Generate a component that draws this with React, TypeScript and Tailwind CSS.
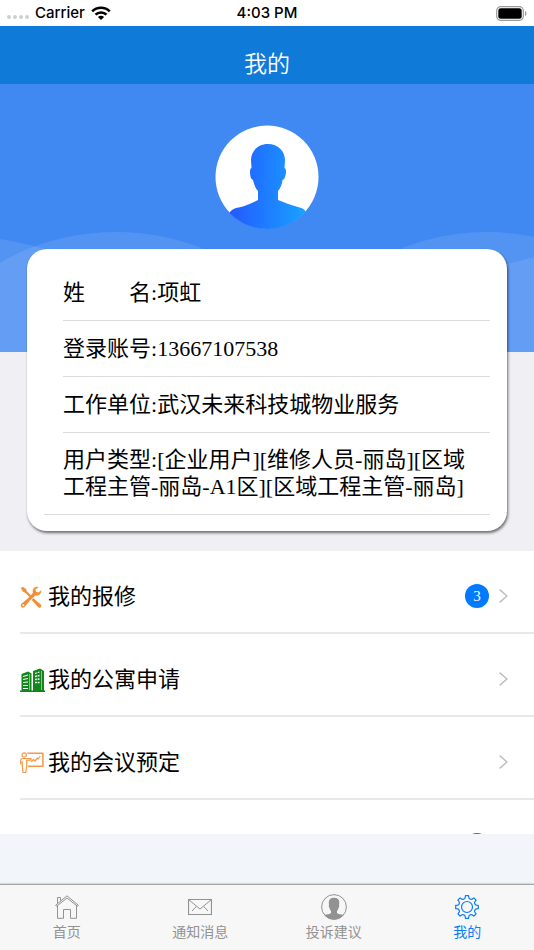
import type { ReactNode } from "react";

function Avatar() {
  return (
    <svg className="size-[104px]" viewBox="0 0 104 104" role="img" aria-label="头像">
      <defs>
        <linearGradient id="person" x1="0" x2="1">
          <stop offset="0" stopColor="#2458ff" />
          <stop offset="1" stopColor="#19a2ff" />
        </linearGradient>
        <clipPath id="disc">
          <circle cx="52" cy="52" r="52" />
        </clipPath>
      </defs>
      <circle cx="52" cy="52" r="51.5" fill="#fff" />
      <path
        clipPath="url(#disc)"
        fill="url(#person)"
        d="M53 19C43 19 36 26 36 35L36.500 43C35.300 43.300 35 45 35 47.500C35.200 52 36 54.500 38 55C39 59.500 40.500 63 43 66V75C38 77.500 33 79.500 28 81.500C22 83 18 83 15 87L13 90V104H91V88C90 84 87 83 83 82C76 80 69 77.500 63 75V66C65.500 63 67 59.500 67.500 55C69.500 54.500 70.500 51.500 71 47.500C71 45 70.800 43.300 69.500 43L70 35C70 26 63 19 53 19Z"
      />
    </svg>
  );
}

function Waves() {
  return (
    <svg
      className="absolute inset-x-0 top-0 h-[268px] w-full bg-[#4088f2]"
      viewBox="0 0 534 268"
      preserveAspectRatio="none"
      aria-hidden="true"
    >
      <path
        fill="#fff"
        fillOpacity="0.1"
        d="M0 179C35 158 75 148 117 148C150 148 178 155 205 165C270 190 330 190 393 168C425 154 455 148 487 148C505 148 520 150 534 153V268H0Z"
      />
      <path
        fill="#fff"
        fillOpacity="0.1"
        d="M0 155C20 158 40 163 60 170C160 205 260 215 360 205C420 196 480 188 534 173V268H0Z"
      />
    </svg>
  );
}

function ToolsIcon() {
  return (
    <svg className="size-[22px]" viewBox="0 0 22 22" fill="#f28f35" aria-hidden="true">
      <path d="M.8 2.200L2.500.8L6.300 3.300L6.600 5L11.200 9.400L9.600 11L5 6.500L3.400 6.100Z" />
      <path d="M13.200 12L20.500 18.300C21.700 19.500 21.500 20.500 20.700 21.200C19.800 22 18.800 21.900 18 21L11.700 14Z" />
      <path
        fillRule="evenodd"
        d="M18.800.9C16 0 13 1.700 12.700 4.600C12.600 5.500 12.700 6.300 12.900 6.900L7.700 12.500L2 17.200C.4 18.400.3 20.100 1.300 21.100C2.400 22.200 4 21.900 5 20.600L9.700 14.700L15.500 9.500C18.700 10.300 21.800 7.900 21.200 4.200L18.400 6.600L15.900 5.800L15.400 3.400ZM3.300 18.300A1 1 0 1 1 3.200 20.300A1 1 0 0 1 3.300 18.300Z"
      />
    </svg>
  );
}

function BuildingsIcon() {
  return (
    <svg className="h-6 w-[25px]" viewBox="0 0 25 24" aria-hidden="true">
      <path
        fill="#12851b"
        d="M0 22.500H1.500V6L8 3.500L11.500 5.500V22.500H13V3L20 .5L24 3V22.500H25V24H0Z"
      />
      <g stroke="#fff" fill="none">
        <path d="M9.500 6V22M21.500 3V22" strokeWidth=".5" />
        <path d="M3 8.500L8 7M3 11.500L8 10.500M3 14.500L8 14M3 17.500H8M3 20.500H8" strokeWidth="1.200" />
        <path d="M15 5.500L19.500 4M15 8.500L19.500 7.500M15 11.500L19.500 11M15 14.500H19.500" strokeWidth="1.300" />
        <path d="M17.300 3V16" stroke="#12851b" strokeWidth=".8" />
      </g>
    </svg>
  );
}

function MeetingIcon() {
  return (
    <svg
      className="h-[22px] w-6"
      viewBox="0 0 24 22"
      fill="none"
      stroke="#f2994a"
      strokeWidth="1.200"
      strokeLinejoin="round"
      strokeLinecap="round"
      aria-hidden="true"
    >
      <circle cx="4.200" cy="3" r="2.200" />
      <path d="M8 1.200H22.900V14.200H8.500" strokeWidth="1.500" />
      <path d="M.7 12V8.500C.7 7 1.700 6.500 3 6.500H11V8.200H6.700V13L5.800 20.500H3L2.300 13V9.500" />
      <path d="M11.500 9.500L13.500 7.500L15 9L17.500 6L18 7L20 4.500" />
    </svg>
  );
}

function HomeIcon() {
  return (
    <svg className="size-6" viewBox="0 0 24 24" fill="none" stroke="currentColor" strokeWidth="1" aria-hidden="true">
      <path d="M.7 10.200L12 .8L23.300 10.200L22.500 11.300L12 3L1.500 11.300Z" />
      <path d="M2.500 10.500V23.300H8.500V14.500H15.500V23.300H21.500V10.500M2.500 8.300V2.500H5.500V5.700" />
    </svg>
  );
}

function MailIcon() {
  return (
    <svg className="size-6" viewBox="0 0 24 24" fill="none" stroke="currentColor" strokeWidth="1" aria-hidden="true">
      <path d="M.5 4.500H23.500V19.500H.5Z" strokeWidth="1.200" />
      <path d="M.7 4.700L12 14L23.300 4.700M4 16L8.500 11.200M20 16L15.500 11.200" />
    </svg>
  );
}

function PersonIcon() {
  return (
    <svg className="size-[26px]" viewBox="0 0 104 104" fill="currentColor" aria-hidden="true">
      <circle cx="52" cy="52" r="49.500" fill="none" stroke="currentColor" strokeWidth="4" />
      <path d="M52 15C38 15 31 22 31 34L32 44C30 45 31 52 34 56C35 61 37 65 40 68V76C36 80 24 82 14 84C24 96 37 102 52 102C67 102 80 96 90 84C80 82 68 80 64 76V68C67 65 69 61 70 56C73 52 74 45 72 44L73 34C73 22 66 15 52 15Z" />
    </svg>
  );
}

function GearIcon() {
  const teeth = Array.from({ length: 8 }, (_, i) => {
    const p = (r: number, deg: number) => {
      const a = ((i * 45 + deg - 90) * Math.PI) / 180;
      return `${(12 + r * Math.cos(a)).toFixed(2)} ${(12 + r * Math.sin(a)).toFixed(2)}`;
    };
    return `${i ? "L" : "M"}${p(8.6, -17)}L${p(9.2, -12)}L${p(11.4, -8)}L${p(11.4, 8)}L${p(9.2, 12)}L${p(8.6, 17)}`;
  }).join("");
  return (
    <svg
      className="size-6"
      viewBox="0 0 24 24"
      fill="none"
      stroke="currentColor"
      strokeWidth="1.200"
      strokeLinejoin="round"
      aria-hidden="true"
    >
      <path d={`${teeth}Z`} />
      <circle cx="12" cy="12" r="5.500" />
    </svg>
  );
}

function StatusBar() {
  return (
    <div className="grid h-[26px] shrink-0 grid-cols-3 items-center bg-white px-[7px] font-['Inter',sans-serif] text-[15px] leading-5 font-medium text-black">
      <div className="flex items-center">
        <div className="flex gap-[2px] pt-2">
          <i className="size-1 rounded-full bg-[#cfcfcf]" />
          <i className="size-1 rounded-full bg-[#cfcfcf]" />
          <i className="size-1 rounded-full bg-[#cfcfcf]" />
          <i className="size-1 rounded-full bg-[#cfcfcf]" />
        </div>
        <span className="ml-[6px]">Carrier</span>
        <svg className="ml-[6px] h-[14px] w-5" viewBox="0 0 20 14" fill="none" stroke="#000" strokeWidth="2.600" aria-hidden="true">
          <path d="M1.200 5.300C6 .5 14 .5 18.800 5.300" />
          <path d="M4.500 8.700C7.500 5.700 12.500 5.700 15.500 8.700" />
          <path d="M10 14L6.900 10.900C8.600 9.300 11.400 9.300 13.100 10.900Z" fill="#000" stroke="none" />
        </svg>
      </div>
      <span className="text-center">4:03 PM</span>
      <svg className="h-[15px] w-[31px] justify-self-end" viewBox="0 0 31 15" aria-hidden="true">
        <rect x=".7" y=".7" width="26.600" height="13.600" rx="4" fill="none" stroke="#999" strokeWidth="1.200" />
        <rect x="2.300" y="2.300" width="23.400" height="10.400" rx="2.500" />
        <path d="M29 5C31 6 31 9 29 10Z" fill="#999" />
      </svg>
    </div>
  );
}

function InfoRow({ label, value }: { label: ReactNode; value: string }) {
  return (
    <div className="ml-[19px] border-b border-[#dcdcdc] py-3.5 pr-4">
      <dt className="inline">{label}:</dt>
      <dd className="inline">{value}</dd>
    </div>
  );
}

function MenuRow({ icon, label, badge }: { icon?: ReactNode; label?: string; badge?: ReactNode }) {
  return (
    <li>
      <a
        href="#"
        className="ml-5 flex h-[83px] items-center border-b-2 border-[#e8e8ea] pt-[9px] pr-[26px] text-[22px] leading-6 text-black"
      >
        <span className="flex w-7 shrink-0 items-center pt-[2px]">{icon}</span>
        <span className="flex-1 pt-[2px]">{label}</span>
        {badge !== undefined && (
          <span className="mr-[10px] flex size-6 items-center justify-center rounded-full bg-[#007aff] text-[15px] text-white">
            {badge}
          </span>
        )}
        <svg className="h-[14px] w-[9px]" viewBox="0 0 9 14" fill="none" stroke="#bdbdc0" strokeWidth="1.400" aria-hidden="true">
          <path d="M.6.6L8 7L.6 13.400" />
        </svg>
      </a>
    </li>
  );
}

function Tab({ icon, label, active = false }: { icon: ReactNode; label: string; active?: boolean }) {
  return (
    <a
      href="#"
      aria-current={active ? "page" : undefined}
      className={`flex flex-1 flex-col items-center gap-[3px] pt-[9px] text-[14px] leading-5 ${
        active ? "text-[#0a7cf5]" : "text-[#929292]"
      }`}
    >
      <span className="flex h-[26px] items-center">{icon}</span>
      {label}
    </a>
  );
}

export default function App() {
  return (
    <div className="flex h-screen flex-col overflow-hidden bg-[#f2f5fa] font-['Liberation_Serif','Noto_Sans_CJK_SC',serif]">
      <StatusBar />
      <header className="flex h-[58px] shrink-0 items-center justify-center bg-[#0f7ad8] pt-5">
        <h1 className="text-[23px] leading-8 font-[350] text-white">我的</h1>
      </header>

      <section className="relative shrink-0 bg-[#efeff4] pt-[41px] pb-5">
        <Waves />
        <div className="relative flex justify-center">
          <Avatar />
        </div>
        <dl className="relative mx-[27px] mt-5 rounded-[20px] bg-white px-[17px] py-4 text-[22px] leading-[27px] text-black shadow-[1px_2px_3px_rgba(0,0,0,0.55)]">
          <InfoRow label={<>姓&emsp;&emsp;名</>} value="项虹" />
          <InfoRow label="登录账号" value="13667107538" />
          <InfoRow label="工作单位" value="武汉未来科技城物业服务" />
          <div className="border-b border-[#dcdcdc] pt-[13px] pr-4 pb-3.5 pl-[19px]">
            <dt className="inline">用户类型:</dt>
            <dd className="inline">[企业用户][维修人员-丽岛][区域工程主管-丽岛-A1区][区域工程主管-丽岛]</dd>
          </div>
        </dl>
      </section>

      <ul className="mb-[50px] min-h-0 flex-1 overflow-hidden bg-white">
        <MenuRow icon={<ToolsIcon />} label="我的报修" badge={3} />
        <MenuRow icon={<BuildingsIcon />} label="我的公寓申请" />
        <MenuRow icon={<MeetingIcon />} label="我的会议预定" />
        <MenuRow badge="" />
      </ul>

      <nav className="flex h-[66px] shrink-0 border-t border-[#a5a5a8] bg-[#f7f7f7] shadow-[0_0_2px_rgba(0,0,0,0.35)]">
        <Tab icon={<HomeIcon />} label="首页" />
        <Tab icon={<MailIcon />} label="通知消息" />
        <Tab icon={<PersonIcon />} label="投诉建议" />
        <Tab icon={<GearIcon />} label="我的" active />
      </nav>
    </div>
  );
}
